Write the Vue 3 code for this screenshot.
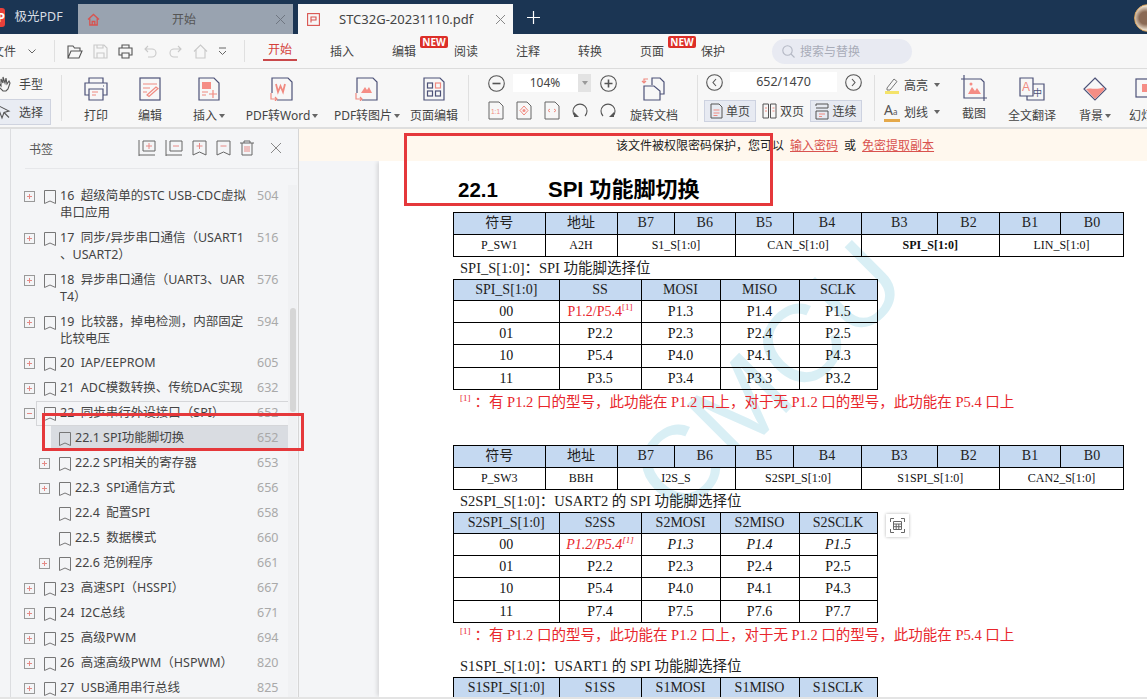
<script setup>
const bigTools = [
  { label: '打印', w: 68 },
  { label: '编辑', w: 40 },
  { label: '插入', w: 78, caret: true },
  { label: 'PDF转Word', w: 68, caret: true },
  { label: 'PDF转图片', w: 102, caret: true },
  { label: '页面编辑', w: 32 },
]

const bookmarks = [
  { text: '16  超级简单的STC USB-CDC虚拟\n串口应用', page: 504, exp: '+' },
  { text: '17  同步/异步串口通信（USART1\n、USART2）', page: 516, exp: '+' },
  { text: '18  异步串口通信（UART3、UAR\nT4）', page: 576, exp: '+' },
  { text: '19  比较器，掉电检测，内部固定\n比较电压', page: 594, exp: '+' },
  { text: '20  IAP/EEPROM', page: 605, exp: '+' },
  { text: '21  ADC模数转换、传统DAC实现', page: 632, exp: '+' },
  { text: '22  同步串行外设接口（SPI）', page: 652, exp: '-', hover: true },
  { text: '22.1 SPI功能脚切换', page: 652, sub: true, sel: true },
  { text: '22.2 SPI相关的寄存器', page: 653, exp: '+', sub: true },
  { text: '22.3  SPI通信方式', page: 656, exp: '+', sub: true },
  { text: '22.4  配置SPI', page: 658, sub: true },
  { text: '22.5  数据模式', page: 660, sub: true },
  { text: '22.6 范例程序', page: 661, exp: '+', sub: true },
  { text: '23  高速SPI（HSSPI）', page: 667, exp: '+' },
  { text: '24  I2C总线', page: 671, exp: '+' },
  { text: '25  高级PWM', page: 694, exp: '+' },
  { text: '26  高速高级PWM（HSPWM）', page: 820, exp: '+' },
  { text: '27  USB通用串行总线', page: 825, exp: '+' },
]

const regCols = [91.5, 72, 57.5, 60.5, 58, 68, 76.5, 62, 61, 63]
const pinCols = [105.5, 82, 79, 79, 78]
const noteText = '：有 P1.2 口的型号，此功能在 P1.2 口上，对于无 P1.2 口的型号，此功能在 P5.4 口上'

const sections = [
  {
    reg: [
      { t: 'P_SW1', span: 1 }, { t: 'A2H', span: 1 }, { t: 'S1_S[1:0]', span: 2 },
      { t: 'CAN_S[1:0]', span: 2 }, { t: 'SPI_S[1:0]', span: 2, bold: true }, { t: 'LIN_S[1:0]', span: 2 },
    ],
    caption: 'SPI_S[1:0]：SPI 功能脚选择位',
    head: ['SPI_S[1:0]', 'SS', 'MOSI', 'MISO', 'SCLK'],
    rows: [
      ['00', 'P1.2/P5.4', 'P1.3', 'P1.4', 'P1.5'],
      ['01', 'P2.2', 'P2.3', 'P2.4', 'P2.5'],
      ['10', 'P5.4', 'P4.0', 'P4.1', 'P4.3'],
      ['11', 'P3.5', 'P3.4', 'P3.3', 'P3.2'],
    ],
    note: true,
  },
  {
    reg: [
      { t: 'P_SW3', span: 1 }, { t: 'BBH', span: 1 }, { t: 'I2S_S', span: 2 },
      { t: 'S2SPI_S[1:0]', span: 2 }, { t: 'S1SPI_S[1:0]', span: 2 }, { t: 'CAN2_S[1:0]', span: 2 },
    ],
    caption: 'S2SPI_S[1:0]：USART2 的 SPI 功能脚选择位',
    head: ['S2SPI_S[1:0]', 'S2SS', 'S2MOSI', 'S2MISO', 'S2SCLK'],
    italicFirst: true,
    rows: [
      ['00', 'P1.2/P5.4', 'P1.3', 'P1.4', 'P1.5'],
      ['01', 'P2.2', 'P2.3', 'P2.4', 'P2.5'],
      ['10', 'P5.4', 'P4.0', 'P4.1', 'P4.3'],
      ['11', 'P7.4', 'P7.5', 'P7.6', 'P7.7'],
    ],
    note: true,
  },
  {
    caption: 'S1SPI_S[1:0]：USART1 的 SPI 功能脚选择位',
    head: ['S1SPI_S[1:0]', 'S1SS', 'S1MOSI', 'S1MISO', 'S1SCLK'],
    rows: [],
  },
]
const regHead = ['符号', '地址', 'B7', 'B6', 'B5', 'B4', 'B3', 'B2', 'B1', 'B0']
</script>

<template>
  <div class="app">
    <!-- title bar -->
    <header class="titlebar">
      <div class="logo">P</div>
      <span class="appname">极光PDF</span>
      <div class="tab tab-home">
        <svg width="13" height="13" viewBox="0 0 13 13" fill="none" stroke="#d9534f" stroke-width="1.3"><path d="M1 6.5 6.5 1.5 12 6.5M2.8 5.5V12h7.4V5.5M5.2 12V8.5h2.6V12" /></svg>
        <span class="tab-title center">开始</span>
        <svg class="tab-x" width="11" height="11" viewBox="0 0 11 11" stroke="#6f7681"><path d="M1 1l9 9M10 1l-9 9" /></svg>
      </div>
      <div class="tab tab-doc">
        <svg width="13" height="13" viewBox="0 0 13 13" fill="none" stroke="#d9534f" stroke-width="1.1"><rect x="0.6" y="0.6" width="11.8" height="11.8" /><path d="M4 9.5V4h5v3H4" /></svg>
        <span class="tab-title">STC32G-20231110.pdf</span>
        <svg class="tab-x" width="11" height="11" viewBox="0 0 11 11" stroke="#888"><path d="M1 1l9 9M10 1l-9 9" /></svg>
      </div>
      <svg class="newtab" width="13" height="13" viewBox="0 0 13 13" stroke="#fff" stroke-width="1.2"><path d="M6.5 0v13M0 6.5h13" /></svg>
      <div class="avatar"></div>
    </header>

    <!-- menu row -->
    <nav class="menubar">
      <span class="file">文件</span>
      <svg class="chev" width="8" height="5" viewBox="0 0 8 5" fill="none" stroke="#666"><path d="M.5.5 4 4 7.5.5" /></svg>
      <i class="vsep qa-sep"></i>
      <div class="quick">
        <svg width="16" height="15" viewBox="0 0 16 15" fill="none" stroke="#555" stroke-width="1.1"><path d="M1 14V2h5l1.5 2H13v3M1 14l3-7h11l-3 7z" /></svg>
        <svg width="15" height="15" viewBox="0 0 15 15" fill="none" stroke="#c9c9c9" stroke-width="1.1"><path d="M1 1h10l3 3v10H1zM4 14V9h7v5M4 1v3h6V1" /></svg>
        <svg width="15" height="15" viewBox="0 0 15 15" fill="none" stroke="#555" stroke-width="1.1"><path d="M4 4V1h7v3M4 11H1V4h13v7h-3M4 9h7v5H4z" /></svg>
        <svg width="15" height="15" viewBox="0 0 15 15" fill="none" stroke="#c9c9c9" stroke-width="1.1"><path d="M5 2 2 5l3 3M2 5h7a4 4 0 0 1 0 8H5" /></svg>
        <svg width="15" height="15" viewBox="0 0 15 15" fill="none" stroke="#c9c9c9" stroke-width="1.1"><path d="M10 2l3 3-3 3M13 5H6a4 4 0 0 0 0 8h4" /></svg>
        <svg width="15" height="15" viewBox="0 0 15 15" fill="none" stroke="#c9c9c9" stroke-width="1.1"><path d="M1 7.5 7.5 1 14 7.5M3 6v8h9V6" /></svg>
        <svg width="9" height="9" viewBox="0 0 9 9" fill="none" stroke="#666"><path d="M1 1h7M1 4l3.5 3.5L8 4" /></svg>
      </div>
      <i class="vsep tabs-sep"></i>
      <span class="mi active">开始</span>
      <span class="mi m1">插入</span>
      <span class="mi m2">编辑</span>
      <b class="new n1">NEW</b>
      <span class="mi m3">阅读</span>
      <span class="mi m4">注释</span>
      <span class="mi m5">转换</span>
      <span class="mi m6">页面</span>
      <b class="new n2">NEW</b>
      <span class="mi m7">保护</span>
      <div class="search">
        <svg width="13" height="13" viewBox="0 0 13 13" fill="none" stroke="#b4b8c4" stroke-width="1.1"><circle cx="5.5" cy="5.5" r="4.7" /><path d="M9 9l3.5 3.5" /></svg>
        <span>搜索与替换</span>
      </div>
    </nav>

    <!-- ribbon -->
    <section class="ribbon">
      <div class="handsel">
        <div class="hs hand">
          <svg width="16" height="16" viewBox="0 0 16 16" fill="none" stroke="#555" stroke-width="1.1"><path d="M-3 5l4 5V3l2 4V1l2 6 1-5 1 6 2-3 1 2-2 6-2 2H3L-3 9" /></svg>
          <span>手型</span>
        </div>
        <div class="hs pick">
          <svg width="16" height="16" viewBox="0 0 16 16" fill="none" stroke="#555" stroke-width="1.1"><path d="M-3 1l12 6-5 1.5L2 14z" /><path d="M4 8.5l5 5" /></svg>
          <span>选择</span>
        </div>
      </div>
      <i class="vsep tall first-sep"></i>

      <div v-for="(tool, i) in bigTools" :key="tool.label" class="tool" :style="{ width: tool.w + 'px' }">
        <svg width="26" height="24" viewBox="0 0 26 24" fill="none" stroke="#4d5278" stroke-width="1.2">
          <g v-if="i === 0">
            <path d="M6 6V1h14v5M6 18H2V6h22v12h-4M20 9h1" />
            <path d="M6 12h14v11H6z" />
            <path d="M9 15h6M9 18h4" stroke="#f08a80" />
          </g>
          <g v-else-if="i === 1">
            <rect x="3" y="1" width="20" height="22" />
            <path d="M6 7h14M6 11h7M6 15h4" stroke="#f08a80" />
            <path d="M10 18l9-8 2 1.5-9 8z" stroke="#f08a80" />
          </g>
          <g v-else-if="i === 2">
            <path d="M3 1h15l5 5v17H3z" />
            <rect x="6" y="5" width="9" height="7" fill="#f58d85" stroke="none" />
            <path d="M6 15h6M6 18h4M17 13v8M13 17h8" stroke="#f08a80" />
          </g>
          <g v-else-if="i === 3">
            <path d="M3 16V1h16l4 4v18H8" />
            <path d="M7 7l2 8 2.5-6 2.5 6 2-8" stroke="#f08a80" stroke-width="1.8" />
            <path d="M2 16v6h6M6 20l2 2-2 2" stroke="#f08a80" />
          </g>
          <g v-else-if="i === 4">
            <path d="M3 16V1h16l4 4v18H8" />
            <path d="M7 16l4-6 2 3 2-3 3 6z" fill="#f58d85" stroke="none" />
            <path d="M2 16v6h6M6 20l2 2-2 2" stroke="#f08a80" />
          </g>
          <g v-else>
            <path d="M3 1h16l4 4v18H3z" />
            <rect x="6.5" y="6" width="5" height="5" />
            <rect x="14.5" y="6" width="5" height="5" stroke="#f08a80" />
            <rect x="6.5" y="14" width="5" height="5" />
            <rect x="14.5" y="14" width="5" height="5" />
          </g>
        </svg>
        <span class="tool-label">{{ tool.label }}<em v-if="tool.caret" class="caret"></em></span>
      </div>
      <i class="vsep tall zoom-sep"></i>

      <div class="zoomblock">
        <div class="zrow">
          <svg width="17" height="17" viewBox="0 0 17 17" fill="none" stroke="#555" stroke-width="1.1"><circle cx="8.5" cy="8.5" r="7.8" /><path d="M4.5 8.5h8" stroke-width="1.6" /></svg>
          <div class="zinput"><span>104%</span><em><i class="caret gray"></i></em></div>
          <svg width="17" height="17" viewBox="0 0 17 17" fill="none" stroke="#555" stroke-width="1.1"><circle cx="8.5" cy="8.5" r="7.8" /><path d="M4.5 8.5h8M8.5 4.5v8" stroke-width="1.6" /></svg>
        </div>
        <div class="zrow two">
          <svg width="16" height="19" viewBox="0 0 16 19" fill="none" stroke="#666"><path d="M1 1h10l4 4v13H1z" /><text x="3" y="13" class="svg-ratio">1:1</text></svg>
          <svg width="16" height="19" viewBox="0 0 16 19" fill="none" stroke="#666"><path d="M1 1h10l4 4v13H1z" /><path d="M8 5l4 4.500-4 4.500-4-4.500z" stroke="#f08a80" /><circle cx="8" cy="9.500" r="1.500" fill="#f58d85" stroke="none" /></svg>
          <svg width="16" height="19" viewBox="0 0 16 19" fill="none" stroke="#666"><path d="M1 1h10l4 4v13H1z" /><path d="M6 8 4 9.500 6 11M10 8l2 1.500L10 11" stroke="#f08a80" /></svg>
          <svg width="16" height="19" viewBox="0 0 16 19" fill="none" stroke="#555" stroke-width="1.1"><path d="M3 15A7 7 0 1 1 13 15" /><path d="M2 11v5h5" fill="#555" stroke="none" /></svg>
          <svg width="16" height="19" viewBox="0 0 16 19" fill="none" stroke="#555" stroke-width="1.1"><path d="M3 15A7 7 0 1 1 13 15" /><path d="M14 11v5H9" fill="#555" stroke="none" /></svg>
        </div>
      </div>

      <div class="tool rotate">
        <svg width="26" height="24" viewBox="0 0 26 24" fill="none" stroke="#4d5278" stroke-width="1.2">
          <path d="M11 8V1h8l4 4v12h-4" />
          <path d="M3 9h10l6 5v9H3z" fill="#f7f7f7" />
          <path d="M3 6V2h4M1 4l2 2 2-2" stroke="#f08a80" />
        </svg>
        <span class="tool-label">旋转文档</span>
      </div>
      <i class="vsep tall nav-sep"></i>

      <div class="navblock">
        <div class="nrow">
          <svg width="17" height="17" viewBox="0 0 17 17" fill="none" stroke="#555" stroke-width="1.1"><circle cx="8.500" cy="8.500" r="7.800" /><path d="M10 5 7 8.500l3 3.500" /></svg>
          <div class="pageinput">652/1470</div>
          <svg width="17" height="17" viewBox="0 0 17 17" fill="none" stroke="#555" stroke-width="1.1"><circle cx="8.500" cy="8.500" r="7.800" /><path d="M7 5l3 3.500L7 12" /></svg>
        </div>
        <div class="nrow views">
          <div class="vbtn on">
            <svg width="13" height="16" viewBox="0 0 13 16" fill="none" stroke="#555"><path d="M1 1h8l3 3v11H1z" /><path d="M3.500 7h6M3.500 10h6M3.500 12.500h4" stroke="#f08a80" /></svg>
            <span>单页</span>
          </div>
          <div class="vbtn">
            <svg width="15" height="16" viewBox="0 0 15 16" fill="none" stroke="#555"><path d="M1 1h5.500v14H1zM8.500 1H14v14H8.500z" /><path d="M3 5h2M3 8h2M10.500 5h2M10.500 8h2" stroke="#f08a80" /></svg>
            <span>双页</span>
          </div>
          <div class="vbtn on">
            <svg width="14" height="17" viewBox="0 0 14 17" fill="none" stroke="#555"><path d="M1 3V1h12v4H1M1 8h12v8H1z" /><path d="M4 11h6M4 13.500h3" stroke="#f08a80" /></svg>
            <span>连续</span>
          </div>
        </div>
      </div>
      <i class="vsep tall marks-sep"></i>

      <div class="marks">
        <div class="mark">
          <svg width="16" height="17" viewBox="0 0 16 17" fill="none" stroke="#777"><path d="M3 11 10 2l3 2.500L6 13H3z" /><path d="M1 15.500h14" stroke="#f4e36a" stroke-width="3" /></svg>
          <span>高亮</span><em class="caret"></em>
        </div>
        <div class="mark">
          <span class="aa">A<small>a</small></span>
          <span>划线</span><em class="caret"></em>
        </div>
      </div>

      <div class="tool w48">
        <svg width="26" height="26" viewBox="0 0 26 26" fill="none" stroke="#4d5278" stroke-width="1.2">
          <path d="M3 0v4h17l3 3v19M0 4h3v19h23M3 23" />
          <path d="M7 19l4-7 3 4 2-3 4 6z" fill="#f58d85" stroke="none" />
          <circle cx="10" cy="9" r="1.500" fill="#f58d85" stroke="none" />
        </svg>
        <span class="tool-label tight">截图</span>
      </div>
      <div class="tool w68">
        <svg width="26" height="24" viewBox="0 0 26 24" fill="none" stroke="#4d5278" stroke-width="1.2">
          <path d="M1 1h13v18H1z" />
          <path d="M14 7h11v16H8v-4" />
          <text x="3" y="14" class="svg-a">A</text>
          <text x="14" y="19" class="svg-zh">中</text>
        </svg>
        <span class="tool-label">全文翻译</span>
      </div>
      <div class="tool w58">
        <svg width="26" height="24" viewBox="0 0 26 24" fill="none" stroke="#4d5278" stroke-width="1.2">
          <path d="M13 1 24 12 13 23 2 12z" />
          <path d="M4 12c5-2 9 2 18-2v3L13 22z" fill="#f58d85" stroke="none" />
        </svg>
        <span class="tool-label">背景<em class="caret"></em></span>
      </div>
      <div class="tool w46">
        <svg width="26" height="24" viewBox="0 0 26 24" fill="none" stroke="#4d5278" stroke-width="1.2">
          <rect x="2" y="2" width="24" height="18" />
          <rect x="8" y="7" width="10" height="8" fill="#f58d85" stroke="none" />
        </svg>
        <span class="tool-label">幻灯片</span>
      </div>
    </section>

    <main class="body">
      <!-- bookmarks -->
      <aside class="sidebar">
        <div class="side-head">
          <span class="side-title">书签</span>
          <div class="side-icons">
            <svg width="18" height="16" viewBox="0 0 18 16" fill="none" stroke="#666"><path d="M1 0v16M1 15h16M5 1h12v10H5z" /><path d="M8 6h6M11 3v6" stroke="#e88a86" /></svg>
            <svg width="18" height="16" viewBox="0 0 18 16" fill="none" stroke="#666"><path d="M1 0v16M1 15h16M5 1h12v10H5z" /><path d="M8 6h6" stroke="#e88a86" /></svg>
            <svg width="15" height="16" viewBox="0 0 15 16" fill="none" stroke="#666"><path d="M1 1h13v14l-6.500-3L1 15z" /><path d="M4.500 6h6M7.500 3v6" stroke="#e88a86" /></svg>
            <svg width="15" height="16" viewBox="0 0 15 16" fill="none" stroke="#666"><path d="M1 1h13v14l-6.500-3L1 15z" /><path d="M4.500 6h6" stroke="#e88a86" /></svg>
            <svg width="14" height="16" viewBox="0 0 14 16" fill="none" stroke="#666"><path d="M0 3h14M4 3V1h6v2M2 3v12h10V3" /><path d="M5 6v6M7 6v6M9 6v6" stroke="#e88a86" /></svg>
            <svg class="side-x" width="10" height="10" viewBox="0 0 10 10" stroke="#888"><path d="M0 0l10 10M10 0 0 10" /></svg>
          </div>
        </div>
        <div class="tree">
          <div
            v-for="b in bookmarks"
            :key="b.text"
            class="row"
            :class="{ sub: b.sub, sel: b.sel, hover: b.hover }"
          >
            <span class="exp" :class="{ none: !b.exp }">
              <svg v-if="b.exp" width="11" height="11" viewBox="0 0 11 11" fill="none" stroke="#999">
                <rect x="0.500" y="0.500" width="10" height="10" />
                <path d="M3 5.500h5" stroke="#e58a86" />
                <path v-if="b.exp === '+'" d="M5.500 3v5" stroke="#e58a86" />
              </svg>
            </span>
            <svg class="mark-ic" width="12" height="14" viewBox="0 0 12 14" fill="none" stroke="#777"><path d="M.5.500h11v13L6 11 .5 13.500z" /></svg>
            <span class="row-text">{{ b.text }}</span>
            <span class="row-page">{{ b.page }}</span>
          </div>
        </div>
        <div class="scroll-track"><div class="scroll-thumb"></div></div>
      </aside>

      <!-- document -->
      <div class="docarea">
        <div class="banner">
          <span>该文件被权限密码保护，您可以</span>
          <a>输入密码</a>
          <span>或</span>
          <a>免密提取副本</a>
        </div>
        <div class="viewport">
          <div class="page">
            <div class="watermark">STCMCU</div>
            <h2 class="heading"><span>22.1</span><span>SPI 功能脚切换</span></h2>

            <div v-for="(s, si) in sections" :key="s.caption" class="section" :class="'sec' + si">
              <table v-if="s.reg" class="sheet">
                <colgroup><col v-for="(c, i) in regCols" :key="i" :style="{ width: c + 'px' }" /></colgroup>
                <tbody>
                  <tr class="hd"><th v-for="h in regHead" :key="h">{{ h }}</th></tr>
                  <tr class="small">
                    <td v-for="c in s.reg" :key="c.t" :colspan="c.span" :class="{ strong: c.bold }">{{ c.t }}</td>
                  </tr>
                </tbody>
              </table>
              <p class="caption">{{ s.caption }}</p>
              <table class="sheet pins">
                <colgroup><col v-for="(c, i) in pinCols" :key="i" :style="{ width: c + 'px' }" /></colgroup>
                <tbody>
                  <tr class="hd"><th v-for="h in s.head" :key="h">{{ h }}</th></tr>
                  <tr v-for="(r, ri) in s.rows" :key="r[0]" :class="{ slant: s.italicFirst && ri === 0 }">
                    <td v-for="(c, ci) in r" :key="ci">
                      <span v-if="ri === 0 && ci === 1" class="red">{{ c }}<sup>[1]</sup></span>
                      <template v-else>{{ c }}</template>
                    </td>
                  </tr>
                </tbody>
              </table>
              <p v-if="s.note" class="note"><sup>[1]</sup><span class="note-body">{{ noteText }}</span></p>
            </div>

            <div class="table-btn">
              <svg width="15" height="15" viewBox="0 0 15 15" fill="none" stroke="#666"><path d="M.5 4V.5H4M11 .5h3.500V4M14.500 11v3.500H11M4 14.500H.5V11" /><path d="M3.500 3.500h8v8h-8zM3.500 6h8M3.500 8.700h8M6.200 6v5.500M8.800 6v5.500" /></svg>
            </div>
          </div>
        </div>
      </div>
    </main>
    <div class="statusline"></div>

    <!-- red annotation boxes drawn on top of the capture -->
    <div class="anno anno-head"></div>
    <div class="anno anno-row"></div>
  </div>
</template>

<style>
html, body { margin: 0; overflow: hidden; }
</style>

<style scoped>
.app {
  position: relative;
  width: 100vw;
  height: 100vh;
  overflow: hidden;
  display: flex;
  flex-direction: column;
  background: #f4f5f7;
  color: #444;
  font-family: "Noto Sans", "Noto Sans CJK SC", sans-serif;
  font-size: 12px;
}

/* title bar */
.titlebar {
  flex: none;
  height: 34px;
  display: flex;
  align-items: flex-end;
  background: #1b3553;
}
.logo {
  width: 16px;
  height: 19px;
  margin: 0 9.500px 7px -11px;
  border-radius: 3px;
  background: #e8403a;
  color: #fff;
  font-weight: 700;
  font-size: 12px;
  line-height: 19px;
  text-align: right;
  overflow: hidden;
}
.appname {
  width: 63.500px;
  height: 34px;
  line-height: 34px;
  color: #d8dde4;
  font-size: 12.500px;
}
.tab {
  width: 215px;
  height: 30px;
  display: flex;
  align-items: center;
  padding: 0 7px 0 9px;
  box-sizing: border-box;
}
.tab-home { background: #99a3b0; margin-right: 5px; }
.tab-doc { background: #f7f7f7; }
.tab-title { margin-left: 19px; font-size: 13px; color: #444; white-space: nowrap; }
.tab-title.center { margin-left: 72px; color: #555; font-size: 12px; }
.tab-x { margin-left: auto; }
.newtab { margin: 0 0 10px 14px; }
.avatar {
  width: 26px;
  height: 26px;
  margin: 0 -15px 2px auto;
  border-radius: 50%;
  border: 1.500px solid #d9a35c;
  background: radial-gradient(circle at 40% 50%, #8a6a55 0 30%, #f2e6d4 60%);
}

/* menu row */
.menubar {
  flex: none;
  height: 34px;
  display: flex;
  align-items: center;
  background: #f7f7f7;
  border-bottom: 1px solid #dcdcdc;
  box-sizing: content-box;
}
.file { margin-left: -8px; width: 36px; white-space: nowrap; }
.chev { margin-right: 0; }
.vsep { display: block; flex: none; width: 1px; background: #e0e0e0; }
.qa-sep { height: 22px; margin-left: 18px; }
.quick { display: flex; align-items: center; gap: 10px; margin-left: 12px; width: 167px; }
.tabs-sep { height: 22px; margin-left: 10px; }
.mi { flex: none; width: 24px; text-align: center; white-space: nowrap; }
.mi.active {
  width: 34px;
  margin-left: 18px;
  height: 34px;
  line-height: 32px;
  color: #d43f3a;
  position: relative;
}
.mi.active::after {
  content: "";
  position: absolute;
  left: 0;
  right: 0;
  top: 25px;
  height: 2px;
  background: #c9484a;
}
.m1 { margin-left: 33px; }
.m2 { margin-left: 38px; }
.new {
  flex: none;
  width: 28px;
  height: 12px;
  margin: -18px 0 0 4px;
  border-radius: 2px;
  background: #dc2e28;
  color: #fff;
  font-size: 10px;
  line-height: 12px;
  text-align: center;
}
.m3 { margin-left: 6px; }
.m4 { margin-left: 38px; }
.m5 { margin-left: 38px; }
.m6 { margin-left: 38px; }
.m7 { margin-left: 5px; }
.search {
  width: 140px;
  height: 25px;
  margin-left: 47px;
  padding-left: 10px;
  box-sizing: border-box;
  display: flex;
  align-items: center;
  gap: 5px;
  border-radius: 13px;
  background: #e8eaf2;
  color: #a8acb8;
}

/* ribbon */
.ribbon {
  flex: none;
  height: 58px;
  display: flex;
  background: #f7f7f7;
  border-bottom: 2px solid #dedede;
  overflow: hidden;
}
.handsel { flex: none; width: 62px; padding-top: 4px; box-sizing: border-box; }
.hs { display: flex; align-items: center; gap: 3px; height: 26px; padding-left: 0; }
.hs span { color: #444; }
.hand { height: 22px; margin-bottom: 4px; }
.pick {
  width: 51px;
  box-sizing: border-box;
  background: #e9ecf3;
  border: 1px solid #cfd3df;
  border-left: 0;
}
.tall { height: 46px; margin-top: 6px; }
.first-sep { margin-left: -1px; }
.tool {
  flex: none;
  display: flex;
  flex-direction: column;
  align-items: center;
  padding-top: 8px;
  box-sizing: border-box;
}
.tool-label { margin-top: 7px; line-height: 16px; white-space: nowrap; }
.tool-label.tight { margin-top: 5px; }
.caret {
  display: inline-block;
  width: 0;
  height: 0;
  margin-left: 2px;
  border: 3.500px solid transparent;
  border-top: 4px solid #666;
  border-bottom: 0;
  vertical-align: 2px;
}
.caret.gray { border-top-color: #999; }
.zoom-sep { margin-left: 18px; }
.zoomblock { flex: none; width: 156px; padding: 5px 0 0 18.500px; box-sizing: border-box; }
.zrow { display: flex; align-items: center; height: 18px; }
.zrow.two { gap: 12px; margin-top: 9px; }
.zinput {
  width: 78px;
  height: 18px;
  margin-left: 8px;
  margin-right: 9px;
  display: flex;
  background: #fff;
  text-align: center;
  line-height: 18px;
}
.zinput span { flex: 1; }
.zinput em {
  width: 13px;
  background: #e3e3e3;
  font-style: normal;
}
.rotate { width: 58px; }
.nav-sep { margin-left: 14px; }
.navblock { flex: none; width: 177px; padding: 3px 0 0 8px; box-sizing: border-box; }
.nrow { display: flex; align-items: center; height: 20px; }
.pageinput {
  width: 107px;
  height: 20px;
  margin: 0 8px 0 7px;
  background: #fff;
  text-align: center;
  line-height: 20px;
  font-size: 12.500px;
}
.views { height: 22px; margin: 8px 0 0 -2px; gap: 5px; }
.vbtn {
  height: 22px;
  width: 52px;
  box-sizing: border-box;
  display: flex;
  align-items: center;
  justify-content: center;
  gap: 3px;
  border: 1px solid transparent;
}
.vbtn:nth-child(2) { width: 44px; }
.vbtn.on { background: #e7eaf2; border-color: #cdd2e0; }
.marks-sep { margin-left: -1px; }
.marks { flex: none; width: 75px; padding: 6px 0 0 9px; box-sizing: border-box; }
.mark { display: flex; align-items: center; gap: 4px; height: 20px; }
.mark + .mark { margin-top: 7px; }
.mark svg, .aa { flex: none; width: 16px; }
.mark em { margin-left: 2px; }
.aa {
  font-size: 14px;
  line-height: 15px;
  border-bottom: 3px solid #e5a94a;
  white-space: nowrap;
  color: #555;
}
.aa small { font-size: 8px; }
.w48 { width: 48px; padding-top: 6px; }
.w68 { width: 68px; }
.w58 { width: 58px; }
.w46 { width: 46px; }
.svg-a { font-size: 12px; fill: #f08a80; stroke: none; font-family: "Liberation Sans", sans-serif; }
.svg-zh { font-size: 9px; fill: #4d5278; stroke: none; }
.svg-ratio { font-size: 6.500px; fill: #f08a80; stroke: none; font-family: "Liberation Sans", sans-serif; }

/* body */
.body { flex: 1; min-height: 0; display: flex; }
.sidebar {
  position: relative;
  flex: none;
  width: 299px;
  box-sizing: border-box;
  padding-left: 10px;
  border-right: 1px solid #d6d6d6;
  background: #f4f5f7;
  display: flex;
  flex-direction: column;
  overflow: hidden;
}
.side-head {
  flex: none;
  height: 40px;
  margin-left: 15px;
  display: flex;
  align-items: center;
  border-bottom: 1px solid #e6e7ea;
  box-sizing: border-box;
}
.side-title { width: 113px; padding-left: 4px; box-sizing: border-box; color: #555; }
.side-icons { display: flex; align-items: center; gap: 9px; margin-top: -2px; }
.side-x { margin-left: 8px; }
.sidebar::before {
  content: "";
  position: absolute;
  left: 10px;
  top: 0;
  bottom: 0;
  width: 1px;
  background: #dcdde0;
}
.tree { padding-top: 14.500px; }
.row {
  position: relative;
  display: flex;
  align-items: flex-start;
  min-height: 25px;
  padding: 3.875px 0 3.875px 14px;
  box-sizing: border-box;
  line-height: 17px;
  font-size: 12.500px;
  color: #555;
}
.row.sub { padding-left: 29px; }
.row.hover::before,
.row.sel::before {
  content: "";
  position: absolute;
  top: 0;
  bottom: 0;
  left: 26px;
  right: 4px;
  border: 1px solid #d5d6d9;
  box-sizing: border-box;
}
.row.sel::before { left: 41px; background: #d9dce1; border: 0; }
.exp { position: relative; flex: none; width: 20px; height: 17px; padding-top: 2px; box-sizing: border-box; }
.mark-ic { position: relative; flex: none; margin: 3px 4px 0 0; }
.row-text { position: relative; flex: none; width: 197px; white-space: pre; color: #444; }
.row.sub .row-text { width: 182px; }
.row-page { position: relative; flex: none; color: #a9a9a9; }
.scroll-track {
  position: absolute;
  right: 1px;
  top: 56px;
  bottom: 0;
  width: 9px;
  background: #f0f1f3;
}
.scroll-thumb {
  width: 6px;
  height: 104px;
  margin: 123px 0 0 2px;
  border-radius: 3px;
  background: #d6d6d6;
}

/* document */
.docarea { flex: 1; min-width: 0; display: flex; flex-direction: column; }
.banner {
  flex: none;
  height: 32px;
  display: flex;
  align-items: center;
  gap: 6px;
  padding-left: 317px;
  background: #fff8ee;
  color: #222;
}
.banner a { color: #d9534f; text-decoration: underline; }
.viewport { flex: 1; min-height: 0; padding-left: 80px; overflow: hidden; background: #f4f5f7; }
.page {
  position: relative;
  height: 100%;
  overflow: hidden;
  padding: 17px 0 0 74px;
  box-sizing: border-box;
  background: #fff;
  box-shadow: -3px 0 4px -1px rgba(0, 0, 0, 0.12);
  font-family: "Liberation Serif", "Noto Sans CJK SC", serif;
  color: #111;
}
.watermark {
  position: absolute;
  left: 104px;
  top: 211px;
  font-family: "Liberation Sans", sans-serif;
  font-size: 110px;
  line-height: 1;
  color: #d9eff5;
  white-space: nowrap;
  transform: rotate(-45deg);
  clip-path: inset(-20px -20px -20px 140px);
}
.heading {
  position: relative;
  margin: 0 0 0 5px;
  height: 24px;
  display: flex;
  font-family: "Liberation Sans", "Noto Sans CJK SC", sans-serif;
  font-size: 22px;
  line-height: 24px;
  font-weight: 700;
  color: #000;
}
.heading span:first-child { width: 90px; font-size: 20.500px; }
.section { position: relative; }
.sec0 { margin-top: 10px; }
.sec1 { margin-top: 35px; }
.sec2 { margin-top: 12px; }
.sheet {
  border-collapse: collapse;
  table-layout: fixed;
  width: 670px;
  font-size: 14px;
}
.sheet.pins { width: 423.500px; }
.sheet th, .sheet td {
  height: 21px;
  padding: 0;
  border: 1px solid #000;
  text-align: center;
  font-weight: 400;
  line-height: 18px;
}
.sheet.pins tr:nth-child(4) td { height: 22px; }
.sheet .hd th { background: #c5d9f1; color: #222; height: 20.500px; }
.small td { font-size: 12px; }
.strong { font-weight: 700 !important; }
.slant td { font-style: italic; }
.slant td:first-child { font-style: normal; }
.red { color: #e8262c; }
.red sup { font-size: 9px; line-height: 0; }
.caption {
  margin: 0 0 0 7px;
  height: 22px;
  line-height: 22px;
  font-size: 14.500px;
  color: #222;
}
.note {
  margin: 0 0 0 7px;
  height: 20px;
  line-height: 24px;
  font-size: 14.500px;
  color: #e8262c;
  white-space: nowrap;
}
.note sup { font-size: 9px; line-height: 0; }
.note-body { margin-left: 4px; }
.table-btn {
  position: absolute;
  left: 507px;
  top: 353px;
  width: 23px;
  height: 23px;
  display: flex;
  align-items: center;
  justify-content: center;
  background: #fff;
  box-shadow: 0 0 3px rgba(0, 0, 0, 0.3);
}
.statusline { flex: none; height: 2px; background: #e4e4e4; }

/* annotations */
.anno { position: absolute; border: 3px solid #e5383b; box-sizing: border-box; pointer-events: none; }
.anno-head { left: 404px; top: 133px; width: 369px; height: 73px; }
.anno-row { left: 42px; top: 413px; width: 262px; height: 38px; }
</style>
